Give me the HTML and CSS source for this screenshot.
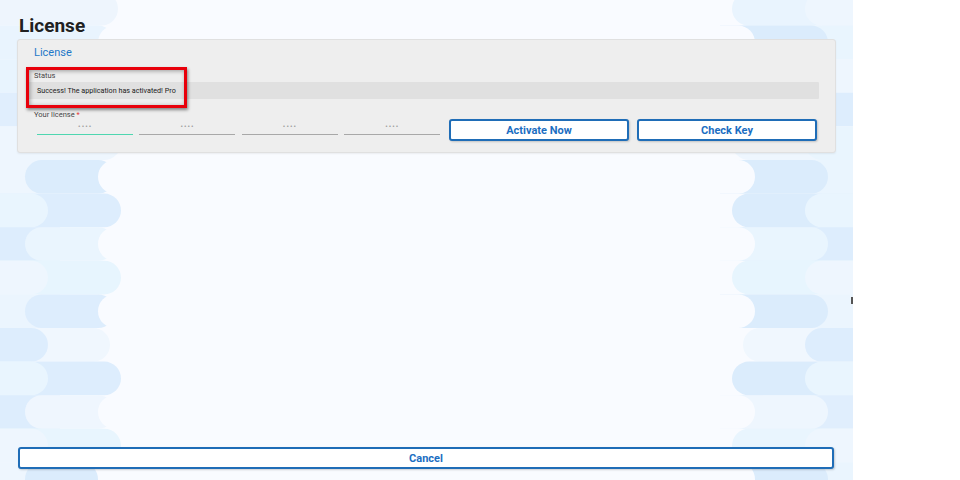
FILE: index.html
```html
<!DOCTYPE html>
<html lang="en">
<head>
<meta charset="utf-8">
<title>License</title>
<link rel="stylesheet" href="styles.css">
</head>
<body>
<div class="screen">
  <div class="app">
    <svg class="deco deco-left" width="130" height="480" viewBox="0 0 130 480" aria-hidden="true">
      <rect x="-40" y="-8" width="158" height="33.6" rx="16.8" fill="#eef5fd"/>
      <rect x="-40" y="25.6" width="155" height="33.6" rx="16.8" fill="#e9f4fe"/>
      <rect x="98" y="25.6" width="100" height="33.6" rx="16.8" fill="#f9fbff"/>
      <rect x="-40" y="59.2" width="161" height="33.6" rx="16.8" fill="#e8f4fe"/>
      <rect x="-40" y="92.8" width="161" height="33.6" rx="16.8" fill="#e0eefd"/>
      <rect x="-40" y="126.4" width="161" height="33.6" rx="16.8" fill="#eef6fe"/>
      <rect x="-40" y="160" width="100" height="33.6" fill="#eef6fe"/>
      <rect x="25" y="160" width="90" height="33.6" rx="16.8" fill="#dbecfc"/>
      <rect x="98" y="160" width="100" height="33.6" rx="16.8" fill="#f9fbff"/>
      <rect x="-40" y="193.6" width="161" height="33.6" rx="16.8" fill="#ddedfd"/>
      <rect x="-40" y="193.6" width="88" height="33.6" rx="16.8" fill="#e9f5fe"/>
      <rect x="-40" y="227.2" width="100" height="33.6" fill="#ddedfd"/>
      <rect x="25" y="227.2" width="90" height="33.6" rx="16.8" fill="#eaf5fe"/>
      <rect x="98" y="227.2" width="100" height="33.6" rx="16.8" fill="#f9fbff"/>
      <rect x="-40" y="260.8" width="161" height="33.6" rx="16.8" fill="#e7f5fe"/>
      <rect x="-40" y="260.8" width="88" height="33.6" rx="16.8" fill="#eef6fe"/>
      <rect x="-40" y="294.4" width="100" height="33.6" fill="#ebf5fe"/>
      <rect x="25" y="294.4" width="90" height="33.6" rx="16.8" fill="#ddedfd"/>
      <rect x="98" y="294.4" width="100" height="33.6" rx="16.8" fill="#f9fbff"/>
      <rect x="-40" y="328" width="150" height="33.6" rx="16.8" fill="#f0f7fe"/>
      <rect x="-40" y="328" width="88" height="33.6" rx="16.8" fill="#ddedfd"/>
      <rect x="-40" y="361.6" width="161" height="33.6" rx="16.8" fill="#ddedfd"/>
      <rect x="-40" y="361.6" width="88" height="33.6" rx="16.8" fill="#e9f5fe"/>
      <rect x="-40" y="395.2" width="100" height="33.6" fill="#ddedfd"/>
      <rect x="25" y="395.2" width="90" height="33.6" rx="16.8" fill="#eff6fe"/>
      <rect x="98" y="395.2" width="100" height="33.6" rx="16.8" fill="#f9fbff"/>
      <rect x="-40" y="428.8" width="161" height="33.6" rx="16.8" fill="#e8f5fe"/>
      <rect x="-40" y="428.8" width="88" height="33.6" rx="16.8" fill="#eef6fe"/>
      <rect x="-40" y="462.4" width="100" height="33.6" fill="#eef6fe"/>
      <rect x="25" y="462.4" width="73" height="33.6" rx="16.8" fill="#dbecfc"/>
    </svg>

    <svg class="deco deco-right" width="133" height="480" viewBox="720 0 133 480" aria-hidden="true">
      <rect x="732" y="-8" width="200" height="33.6" rx="16.8" fill="#e9f4fe"/>
      <rect x="805" y="-8" width="200" height="33.6" rx="16.8" fill="#eef6fe"/>
      <rect x="740" y="25.6" width="160" height="33.6" fill="#e9f5fe"/>
      <rect x="700" y="25.6" width="128" height="33.6" rx="16.8" fill="#dbecfc"/>
      <rect x="600" y="25.6" width="155" height="33.6" rx="16.8" fill="#f9fbff"/>
      <rect x="732" y="59.2" width="200" height="33.6" rx="16.8" fill="#e9f5fe"/>
      <rect x="805" y="59.2" width="200" height="33.6" rx="16.8" fill="#eef6fe"/>
      <rect x="740" y="92.8" width="160" height="33.6" fill="#ddedfd"/>
      <rect x="700" y="92.8" width="128" height="33.6" rx="16.8" fill="#e4f2fe"/>
      <rect x="600" y="92.8" width="155" height="33.6" rx="16.8" fill="#f9fbff"/>
      <rect x="732" y="126.4" width="200" height="33.6" rx="16.8" fill="#eef6fe"/>
      <rect x="805" y="126.4" width="200" height="33.6" rx="16.8" fill="#e9f5fe"/>
      <rect x="740" y="160" width="160" height="33.6" fill="#eaf5fe"/>
      <rect x="700" y="160" width="128" height="33.6" rx="16.8" fill="#dbecfc"/>
      <rect x="600" y="160" width="155" height="33.6" rx="16.8" fill="#f9fbff"/>
      <rect x="732" y="193.6" width="200" height="33.6" rx="16.8" fill="#dbecfc"/>
      <rect x="805" y="193.6" width="200" height="33.6" rx="16.8" fill="#e9f5fe"/>
      <rect x="740" y="227.2" width="160" height="33.6" fill="#ddedfd"/>
      <rect x="700" y="227.2" width="128" height="33.6" rx="16.8" fill="#e9f5fe"/>
      <rect x="600" y="227.2" width="155" height="33.6" rx="16.8" fill="#f9fbff"/>
      <rect x="732" y="260.8" width="200" height="33.6" rx="16.8" fill="#e7f5fe"/>
      <rect x="805" y="260.8" width="200" height="33.6" rx="16.8" fill="#eef6fe"/>
      <rect x="740" y="294.4" width="160" height="33.6" fill="#ebf5fe"/>
      <rect x="700" y="294.4" width="128" height="33.6" rx="16.8" fill="#dbecfc"/>
      <rect x="600" y="294.4" width="155" height="33.6" rx="16.8" fill="#f9fbff"/>
      <rect x="743" y="328" width="200" height="33.6" rx="16.8" fill="#f0f7fe"/>
      <rect x="805" y="328" width="200" height="33.6" rx="16.8" fill="#ddedfd"/>
      <rect x="732" y="361.6" width="200" height="33.6" rx="16.8" fill="#dbecfc"/>
      <rect x="805" y="361.6" width="200" height="33.6" rx="16.8" fill="#e9f5fe"/>
      <rect x="740" y="395.2" width="160" height="33.6" fill="#e0eefd"/>
      <rect x="700" y="395.2" width="128" height="33.6" rx="16.8" fill="#eef6fe"/>
      <rect x="600" y="395.2" width="155" height="33.6" rx="16.8" fill="#f9fbff"/>
      <rect x="732" y="428.8" width="200" height="33.6" rx="16.8" fill="#e9f5fe"/>
      <rect x="805" y="428.8" width="200" height="33.6" rx="16.8" fill="#eef6fe"/>
      <rect x="740" y="462.4" width="160" height="33.6" fill="#eaf5fe"/>
      <rect x="700" y="462.4" width="128" height="33.6" rx="16.8" fill="#dbecfc"/>
      <rect x="600" y="462.4" width="155" height="33.6" rx="16.8" fill="#f9fbff"/>
    </svg>

    <main class="content">
      <h1 class="page-title">License</h1>
      <section class="card">
        <h2 class="card-title">License</h2>
        <span class="field-label">Status</span>
        <div class="status-value">Success! The application has activated! Pro</div>
        <div class="license-row">
          <div class="license-fields">
            <span class="field-label">Your license <span class="req">*</span></span>
            <div class="inputs">
              <input class="key-input active" type="text" placeholder="••••">
              <input class="key-input" type="text" placeholder="••••">
              <input class="key-input" type="text" placeholder="••••">
              <input class="key-input" type="text" placeholder="••••">
            </div>
          </div>
          <div class="actions">
            <button class="btn" type="button">Activate Now</button>
            <button class="btn" type="button">Check Key</button>
          </div>
        </div>
        <div class="highlight"></div>
      </section>
      <div class="spacer"></div>
      <button class="btn btn-cancel" type="button">Cancel</button>
    </main>
  </div>
  <div class="mark"></div>
</div>
</body>
</html>
```

FILE: styles.css
```css
* {
  box-sizing: border-box;
}

html,
body {
  margin: 0;
  padding: 0;
  background: #ffffff;
  font-family: Roboto, "Noto Sans", "Liberation Sans", sans-serif;
}

.screen {
  position: relative;
  width: 960px;
  height: 480px;
}

.app {
  position: relative;
  width: 853px;
  height: 480px;
  background: #f9fbff;
  overflow: hidden;
}

.deco {
  position: absolute;
  top: 0;
}

.deco-left {
  left: 0;
}

.deco-right {
  left: 720px;
}

.content {
  position: relative;
  height: 100%;
  display: flex;
  flex-direction: column;
  padding: 0 17px 11px 17px;
}

.page-title {
  margin: 0 0 4px 2px;
  padding-top: 16px;
  font-size: 19px;
  line-height: 19px;
  font-weight: 700;
  color: #212121;
}

.card {
  position: relative;
  height: 114px;
  background: #eeeeee;
  border: 1px solid #e0e0e0;
  border-radius: 3px;
  box-shadow: 0 1px 2px rgba(0, 0, 0, 0.06);
  padding: 6px 16px 11px 10px;
}

.card-title {
  margin: 0 0 11px 6px;
  font-size: 11px;
  line-height: 14px;
  font-weight: 400;
  color: #1e78c8;
}

.field-label {
  display: block;
  margin-left: 6px;
  font-size: 7.5px;
  line-height: 9px;
  color: #444444;
}

.req {
  color: #e53935;
}

.status-value {
  margin-top: 2px;
  height: 17px;
  background: #e0e0e0;
  border-radius: 1px;
  padding-left: 9px;
  font-size: 7.2px;
  line-height: 17px;
  font-weight: 400;
  color: #1a1a1a;
}

.license-row {
  display: flex;
  align-items: flex-start;
  margin-top: 11px;
}

.license-fields {
  width: 412px;
}

.inputs {
  display: flex;
  gap: 6.5px;
  margin: 1px 0 0 9px;
}

.key-input {
  width: 96px;
  height: 15px;
  padding: 0 0 2px;
  border: 0;
  border-bottom: 1px solid #a8a8a8;
  background: transparent;
  text-align: center;
  font-family: "DejaVu Sans", sans-serif;
  font-size: 5px;
  letter-spacing: 0.6px;
  color: #777777;
  outline: none;
}

.key-input::placeholder {
  color: #8c8c8c;
}

.key-input.active {
  border-bottom-color: #4fd6b0;
}

.actions {
  display: flex;
  gap: 8px;
  margin: 9px 0 0 9px;
}

.btn {
  width: 180px;
  height: 22px;
  padding: 0;
  background: #ffffff;
  border: 2px solid #1f6db7;
  border-radius: 3px;
  box-shadow: 1px 1px 2px rgba(0, 0, 0, 0.18);
  font-family: Roboto, "Noto Sans", sans-serif;
  font-size: 11px;
  font-weight: 700;
  color: #1b6ec2;
}

.spacer {
  flex: 1;
}

.btn-cancel {
  width: auto;
  margin: 0 2px 0 1px;
}

.highlight {
  position: absolute;
  left: 8px;
  top: 27px;
  width: 161px;
  height: 41px;
  border: 3.5px solid #e8000b;
  box-shadow: 1px 2px 3px rgba(0, 0, 0, 0.45), inset 1px 1px 4px rgba(0, 0, 0, 0.35);
}

.mark {
  position: absolute;
  left: 851px;
  top: 297px;
  width: 2px;
  height: 7px;
  background: #555555;
}
```
